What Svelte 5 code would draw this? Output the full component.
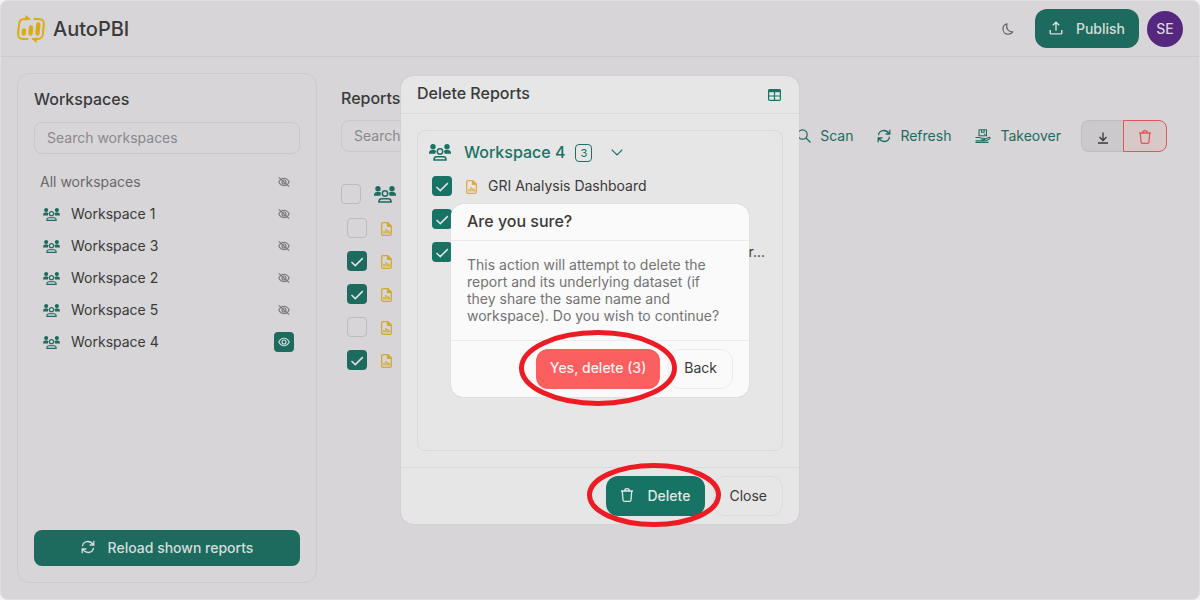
<script>
  const workspaces = [
    { name: 'Workspace 1', shown: false },
    { name: 'Workspace 3', shown: false },
    { name: 'Workspace 2', shown: false },
    { name: 'Workspace 5', shown: false },
    { name: 'Workspace 4', shown: true }
  ];
  const reports = [false, true, true, false, true];
  const selected = ['GRI Analysis Dashboard', '', 'r...'];
</script>

{#snippet people(cls)}
  <svg class={cls} viewBox="0 0 22 17" aria-hidden="true">
    <g fill="currentColor">
      <circle cx="4" cy="2.7" r="2.7" /><circle cx="18" cy="2.7" r="2.7" />
      <path d="M0 9.800V9c0-2 1.300-3 3-3h2c1 0 1.800.3 2.200.9C6.500 7.800 6.300 8.800 6.500 9.800zM22 9.800V9c0-2-1.300-3-3-3h-2c-1 0-1.800.3-2.200.9.7.9.900 1.900.7 2.900z" />
    </g>
    <g fill="none" stroke="currentColor" stroke-width="1.500">
      <circle cx="11" cy="7.500" r="2.700" />
      <path d="M5 16.100v-.6c0-1.700 1.300-2.700 3-2.700h6c1.700 0 3 1 3 2.700v.6z" />
    </g>
  </svg>
{/snippet}

{#snippet refresh()}
  <svg class="i14" viewBox="0 0 14 14" fill="none" stroke="currentColor" stroke-width="1.300" aria-hidden="true">
    <path d="M1.500 6.200C1.700 3.500 4 1.500 6.800 1.500c2.300 0 4 1.100 5.200 3M12.800.8v4.200H8.600M12.500 7.800c-.3 2.700-2.500 4.700-5.300 4.700-2.300 0-4-1.100-5.200-3M1.200 13.200V9h4.200" />
  </svg>
{/snippet}

{#snippet trash()}
  <svg class="i14" viewBox="0 0 14 14" fill="none" stroke="currentColor" stroke-width="1.300" stroke-linejoin="round" aria-hidden="true">
    <path d="M1 3h12M4.600 3c0-1.400 1-2.300 2.400-2.300S9.400 1.600 9.400 3M2.300 3l.7 9c.1.800.6 1.300 1.400 1.300h5.200c.8 0 1.300-.5 1.400-1.300l.7-9" />
  </svg>
{/snippet}

{#snippet file()}
  <svg class="file" viewBox="0 0 11 14" fill="none" stroke="currentColor" stroke-width="1.300" aria-hidden="true">
    <path d="M2 .7h4.800L10.300 4v8c0 .8-.5 1.300-1.300 1.300H2C1.200 13.300.7 12.800.7 12V2C.7 1.200 1.200.7 2 .7z" />
    <path d="M6.500.8v3.500h3.700z" fill="currentColor" />
    <path d="M3 9v2.500M5 7v4.500M7 8v3.500M8.500 9.500v2" />
  </svg>
{/snippet}

{#snippet eye(off)}
  <svg class="eye" viewBox="0 0 12 10" fill="none" stroke="currentColor" stroke-width="1.100" aria-hidden="true">
    <path d="M.8 5C2 2.600 3.800 1.300 6 1.300S10 2.600 11.200 5C10 7.400 8.200 8.700 6 8.700S2 7.400.8 5z" />
    <circle cx="6" cy="5" r="2" />
    {#if off}<path d="M.7.4l10.600 9.200" />{/if}
  </svg>
{/snippet}

{#snippet tick(on, name)}
  <span class="tick">
    <input type="checkbox" checked={on} aria-label={name} />
    <svg viewBox="0 0 20 20" fill="none" stroke="currentColor" stroke-width="1.500" aria-hidden="true"><path d="M4.500 11l3.800 3.600 7.500-7.500" /></svg>
  </span>
{/snippet}

<div class="window">
  <header class="topbar">
    <svg class="logo" viewBox="0 0 28 28" aria-hidden="true">
      <g fill="none" stroke="currentColor" stroke-width="2" stroke-linecap="round">
        <path d="M10.500 24H6.500C2.500 24 .8 22 1.100 18.500L2 9.500C2.300 5.800 4 4 7.500 4H12" />
        <path d="M17.500 4h4c4 0 5.600 2 5.300 5.500l-.8 9C25.700 22.200 24 24 20.500 24H16" />
      </g>
      <path fill="currentColor" d="M8.500 0l5.500 4.200L8 5.500zM19.500 28L14.300 23.500l6-1z" />
      <g stroke="currentColor" stroke-width="4.400" stroke-linecap="round">
        <path d="M7 15.500l-.3 3M14 12.500l-.5 6M21.300 9.500l-.8 9" />
      </g>
    </svg>
    <span class="brand">AutoPBI</span>
    <button class="plain moon" aria-label="Theme">
      <svg viewBox="0 0 12 12" fill="none" stroke="currentColor" stroke-width="1.200" stroke-linejoin="round" aria-hidden="true"><path d="M5 .8C2.700 1.300 1 3.300 1 6c0 3 2.200 5.200 5.200 5.200 2 0 3.600-.9 4.600-2.400C7 9.400 3.500 6 5 .8z" /></svg>
    </button>
    <button class="btn primary publish">
      <svg class="i14" viewBox="0 0 14 14" fill="none" stroke="currentColor" stroke-width="1.400" aria-hidden="true"><path d="M1.200 9v3c0 .6.300.9.900.9h9.800c.6 0 .9-.3.900-.9V9M7 9.800V1.300M3.800 4.300L7 1.200l3.200 3.100" /></svg>
      Publish
    </button>
    <button class="avatar">SE</button>
  </header>

  <div class="content">
    <aside class="sidebar">
      <h2>Workspaces</h2>
      <input class="search" type="text" placeholder="Search workspaces" aria-label="Search workspaces" />
      <ul>
        <li class="all"><span>All workspaces</span><button class="plain view" aria-label="Show">{@render eye(true)}</button></li>
        {#each workspaces as w}
          <li>
            {@render people('team small')}
            <span>{w.name}</span>
            <button class="plain view" class:shown={w.shown} aria-label="Show">{@render eye(!w.shown)}</button>
          </li>
        {/each}
      </ul>
      <button class="btn primary reload">{@render refresh()}Reload shown reports</button>
    </aside>

    <main class="reports">
      <h2>Reports</h2>
      <div class="toolbar">
        <input class="search" type="text" placeholder="Search" aria-label="Search" />
        <div class="actions">
          <button class="plain">
            <svg class="i14" viewBox="0 0 14 14" fill="none" stroke="currentColor" stroke-width="1.200" aria-hidden="true"><circle cx="5.500" cy="5.500" r="4.700" /><path d="M9 9l4.500 4.500" /></svg>
            Scan
          </button>
          <button class="plain">{@render refresh()}Refresh</button>
          <button class="plain">
            <svg class="hand" viewBox="0 0 16 14" fill="none" stroke="currentColor" stroke-width="1.100" stroke-linejoin="round" aria-hidden="true">
              <path d="M4 .7h7.500v6H4zM6.500.8v2.500h2.600V.8M9 5.200h1.300" />
              <path d="M.5 8.500h3.700c1.200 0 1.700.8 3 .8h1.600c1 0 1 1.500 0 1.500H6.300M9.800 10.200l3.800-1.800c1.300-.5 2 .7 1 1.500-1.300 1-2.700 1.800-4.600 1.800H.5M.5 13.400h13" />
            </svg>
            Takeover
          </button>
        </div>
        <div class="segments">
          <button aria-label="Download"><svg class="i12" viewBox="0 0 12 14" fill="none" stroke="currentColor" stroke-width="1.300" aria-hidden="true"><path d="M6 2.500v7.500M2.500 7L6 10.500 9.500 7M1 13h10" /></svg></button>
          <button class="danger" aria-label="Delete">{@render trash()}</button>
        </div>
      </div>
      <div class="group">
        {@render tick(false, 'Workspace 4')}
        {@render people('team')}
      </div>
      <div class="rows">
        {#each reports as on}
          <div class="row">{@render tick(on, 'Report')}{@render file()}</div>
        {/each}
      </div>
    </main>
  </div>

  <div class="overlay">
    <section class="modal" role="dialog" aria-labelledby="delete-title">
      <header class="head">
        <h2 id="delete-title">Delete Reports</h2>
        <button class="plain" aria-label="Table">
          <svg class="grid" viewBox="0 0 13 12" aria-hidden="true"><rect x=".6" y=".6" width="11.800" height="10.800" rx="1.200" fill="none" stroke="currentColor" stroke-width="1.200" /><path d="M.5.500h12v2.700H.5z" fill="currentColor" /><path d="M.5 7h12M6.500 3v8.500" stroke="currentColor" stroke-width="1.200" /></svg>
        </button>
      </header>
      <div class="body">
        <div class="box">
          <div class="heading">
            {@render people('team')}
            <strong>Workspace 4</strong>
            <span class="count">3</span>
            <button class="plain" aria-label="Collapse"><svg class="chev" viewBox="0 0 12 7" fill="none" stroke="currentColor" stroke-width="1.200" aria-hidden="true"><path d="M.7.700L6 6 11.300.700" /></svg></button>
          </div>
          {#each selected as name, i}
            <div class="row" class:cut={i === 2}>{@render tick(true, 'Report')}{@render file()}<span>{name}</span></div>
          {/each}
        </div>
      </div>
      <footer class="foot">
        <span class="marked">
          <button class="btn primary delete">{@render trash()}Delete</button>
          <svg class="ring low" viewBox="0 0 134 64" aria-hidden="true"><ellipse cx="67" cy="32" rx="64.500" ry="29.500" /></svg>
        </span>
        <button class="btn">Close</button>
      </footer>
    </section>
  </div>

  <div class="overlay">
    <section class="modal confirm" role="alertdialog" aria-labelledby="sure-title">
      <header class="head"><h2 id="sure-title">Are you sure?</h2></header>
      <p>This action will attempt to delete the report and its underlying dataset (if they share the same name and workspace). Do you wish to continue?</p>
      <footer class="foot">
        <span class="marked">
          <button class="btn yes">Yes, delete (3)</button>
          <svg class="ring high" viewBox="0 0 158 76" aria-hidden="true"><ellipse cx="79" cy="38" rx="76.500" ry="35.500" /></svg>
        </span>
        <button class="btn">Back</button>
      </footer>
    </section>
  </div>
</div>

<style>
  :global(body) { background: #f1f1f1; }
  .window, .window * { box-sizing: border-box; }
  .window {
    position: relative;
    display: flex;
    flex-direction: column;
    min-height: 100vh;
    border: 1px solid #dfdee0;
    border-radius: 8px;
    background: #d7d5d8;
    color: #3a3a3a;
    font: 14px/17px Inter, sans-serif;
  }
  button, input { font: inherit; color: inherit; margin: 0; }
  svg { display: block; flex: none; }
  h2 { margin: 0; font-size: 16px; line-height: 20px; font-weight: 500; }
  .plain { display: flex; align-items: center; padding: 0; border: 0; background: none; }
  .i14 { width: 14px; height: 14px; }
  .i12 { width: 12px; height: 14px; }

  .topbar { display: flex; align-items: center; height: 56px; padding: 0 16px; border-bottom: 1px solid #cccacd; }
  .logo { width: 28px; height: 28px; color: #dbab15; }
  .brand { margin-left: 8px; font-size: 20px; line-height: 24px; font-weight: 500; }
  .moon { margin-left: auto; margin-right: 21px; color: #666; }
  .moon svg { width: 12px; height: 12px; }
  .btn {
    display: flex; align-items: center; justify-content: center;
    height: 40px; padding: 0 15px 2px;
    border: 1px solid #dcdcdc; border-radius: 12px;
    background: transparent; white-space: nowrap;
  }
  .primary { border: 0; background: #1d6b5f; color: #d8dcda; font-weight: 500; }
  .publish { height: 39px; padding: 0 14px 1px; gap: 13px; }
  .avatar { width: 36px; height: 36px; margin-left: 8px; padding: 0; border: 0; border-radius: 50%; background: #55277f; color: #d8d5dc; font-weight: 500; }

  .content { flex: 1; display: flex; gap: 8px; padding: 16px; }
  .sidebar { display: flex; flex-direction: column; flex: 0 0 300px; padding: 15px 16px 16px; border: 1px solid #cccacd; border-radius: 12px; }
  .search { height: 32px; padding: 0 12px 2px; border: 1px solid #cac8cb; border-radius: 8px; background: transparent; outline: 0; }
  .search::placeholder { color: #8a898b; opacity: 1; }
  .sidebar .search { margin-top: 13px; }
  ul { list-style: none; margin: 12px 0 0; padding: 0 6px; }
  li { display: flex; align-items: center; height: 32px; padding-left: 3px; }
  li span { margin-left: 11px; padding-bottom: 2px; }
  .all { padding-left: 0; color: #69686a; }
  .all span { margin-left: 0; }
  .view { justify-content: center; width: 20px; height: 20px; margin-left: auto; border-radius: 4px; color: #777; }
  .shown { background: #1d6b5f; color: #d8dcda; }
  .eye { width: 12px; height: 10px; }
  .team { width: 22px; height: 17px; color: #1d6b5f; }
  .small { width: 17px; height: 13px; }
  .reload { height: 36px; margin-top: auto; gap: 13px; border-radius: 8px; }

  .reports { flex: 1; min-width: 0; padding: 15px 16px; }
  .toolbar { display: flex; align-items: center; margin-top: 12px; }
  .toolbar .search { flex: 1; min-width: 0; }
  .actions { display: flex; gap: 24px; margin: 0 20px 0 24px; color: #1d6b5f; }
  .actions button { gap: 9px; padding-bottom: 1px; }
  .hand { width: 16px; height: 14px; }
  .segments { display: flex; }
  .segments button { display: grid; place-items: center; width: 42px; height: 32px; padding: 2px 0 0; border: 1px solid #bfbdc0; border-right: 0; border-radius: 8px 0 0 8px; background: #cbc9cc; }
  .segments .danger { width: 44px; border: 1px solid #e15759; border-radius: 0 8px 8px 0; background: #d8c9c9; color: #e15759; }

  .tick { display: grid; flex: none; width: 20px; height: 20px; }
  .tick > * { grid-area: 1 / 1; }
  .tick input { appearance: none; width: 20px; height: 20px; border: 1px solid #bdbbbe; border-radius: 4px; }
  .tick input:checked { border: 0; background: #1d6b5f; }
  .tick svg { width: 20px; height: 20px; color: #e3e3e3; visibility: hidden; pointer-events: none; }
  .tick input:checked + svg { visibility: visible; }
  .group { display: flex; align-items: center; gap: 13px; margin-top: 32px; }
  .rows { margin-top: 7px; padding-left: 6px; }
  .row { display: flex; align-items: center; height: 33px; }
  .file { width: 11px; height: 14px; margin: 2px 0 0 14px; color: #d3aa31; }

  .overlay { position: absolute; inset: 0; display: grid; place-items: center; }
  .modal { width: 398px; max-width: 100%; border-radius: 12px; background: #e6e6e6; box-shadow: 0 0 1px #aaa; }
  .head { display: flex; justify-content: space-between; align-items: center; height: 38px; padding: 0 18px 3px 16px; border-bottom: 1px solid #dadada; color: #3a3a3a; }
  .head .plain { padding-top: 3px; color: #177364; }
  .grid { width: 13px; height: 12px; }
  .body { padding: 16px; }
  .box { min-height: 321px; padding: 5px 14px 16px; border: 1px solid #dadada; border-radius: 8px; }
  .heading { display: flex; align-items: center; height: 33px; margin-left: -3px; color: #177364; }
  .heading strong { margin-left: 13px; padding-bottom: 2px; font-size: 16px; line-height: 20px; font-weight: 500; }
  .count { margin-left: 10px; width: 17px; height: 18px; border: 1px solid #177364; border-radius: 4px; font-size: 11px; line-height: 16px; text-align: center; }
  .chev { width: 12px; height: 7px; margin-left: 19px; }
  .modal .team { color: #177364; }
  .modal .tick input { background: #177364; }
  .box .file { color: #e0ac42; }
  .box .row span:last-child { margin-left: 11px; }
  .box .cut span:last-child { margin-left: auto; margin-right: 3px; }
  .foot { display: flex; justify-content: flex-end; gap: 8px; padding: 8px 16px; border-top: 1px solid #dadada; }
  .modal .primary { background: #177364; color: #dfe8e6; }
  .delete { gap: 13px; padding: 0 15px 2px 14px; }
  .marked { position: relative; z-index: 1; }
  .ring { position: absolute; fill: none; stroke: #ed1c24; stroke-width: 5px; pointer-events: none; }
  .low { width: 134px; height: 64px; left: -19px; top: -13px; }
  .high { width: 158px; height: 76px; left: -17px; top: -19px; }

  .confirm { width: 298px; background: #fafafa; }
  .confirm .head { height: 37px; padding-bottom: 2px; border-color: #ebebeb; }
  .confirm .foot { border-color: #ebebeb; }
  .confirm .btn { border-color: #ececec; }
  .confirm p { margin: 0; padding: 15px 24px 16px 16px; color: #737373; }
  .confirm .yes { border: 0; background: #fb5f60; color: #fff0f0; padding: 0 14px 2px; font-weight: 500; }
</style>
